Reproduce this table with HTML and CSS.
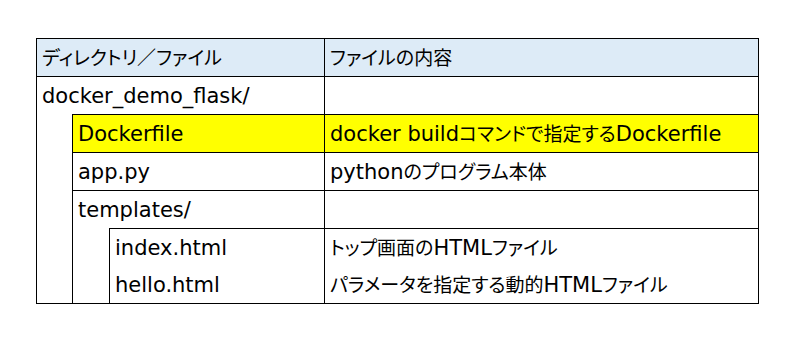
FILE: index.html
```html
<!DOCTYPE html>
<html lang="ja">
<head>
<meta charset="utf-8">
<link rel="stylesheet" href="styles.css">
</head>
<body>
<table class="tree">
  <colgroup>
    <col class="c-indent1">
    <col class="c-indent2">
    <col class="c-name">
    <col class="c-desc">
  </colgroup>
  <tr class="head">
    <th colspan="3"><span class="ja">ディレクトリ／ファイル</span></th>
    <th><span class="ja">ファイルの内容</span></th>
  </tr>
  <tr>
    <td colspan="3" class="open-bottom">docker_demo_flask/</td>
    <td></td>
  </tr>
  <tr class="hl">
    <td rowspan="5" class="indent"></td>
    <td colspan="2">Dockerfile</td>
    <td>docker build<span class="ja">コマンドで指定する</span>Dockerfile</td>
  </tr>
  <tr>
    <td colspan="2">app.py</td>
    <td>python<span class="ja">のプログラム本体</span></td>
  </tr>
  <tr>
    <td colspan="2" class="open-bottom">templates/</td>
    <td></td>
  </tr>
  <tr>
    <td rowspan="2" class="indent"></td>
    <td class="open-bottom">index.html</td>
    <td class="open-bottom"><span class="ja">トップ画面の</span>HTML<span class="ja">ファイル</span></td>
  </tr>
  <tr>
    <td class="open-top">hello.html</td>
    <td class="open-top"><span class="ja">パラメータを指定する動的</span>HTML<span class="ja">ファイル</span></td>
  </tr>
</table>
</body>
</html>
```

FILE: styles.css
```css
html, body {
  margin: 0;
  padding: 0;
  background: #ffffff;
}
body {
  padding: 38px 0 0 36px;
  font-family: "DejaVu Sans", "Noto Sans CJK JP", sans-serif;
  font-size: 21px;
  color: #000000;
}
.ja {
  font-family: "Noto Sans CJK JP", sans-serif;
  font-size: 19px;
  font-feature-settings: "palt";
}
.tree {
  border-collapse: collapse;
  table-layout: fixed;
  width: 722px;
}
.c-indent1 { width: 36px; }
.c-indent2 { width: 37px; }
.c-name { width: 215px; }
.c-desc { width: 434px; }
.tree th,
.tree td {
  height: 37px;
  padding: 0 0 0 5px;
  border: 1px solid #000000;
  text-align: left;
  vertical-align: middle;
  font-weight: normal;
  white-space: nowrap;
  line-height: 24px;
}
.head th {
  background: #ddebf7;
}
.hl td {
  background: #ffff00;
}
.hl td.indent {
  background: #ffffff;
}
.tree td.indent {
  border-top: none;
}
.tree td.open-bottom {
  border-bottom: none;
}
.tree td.open-top {
  border-top: none;
}
```
